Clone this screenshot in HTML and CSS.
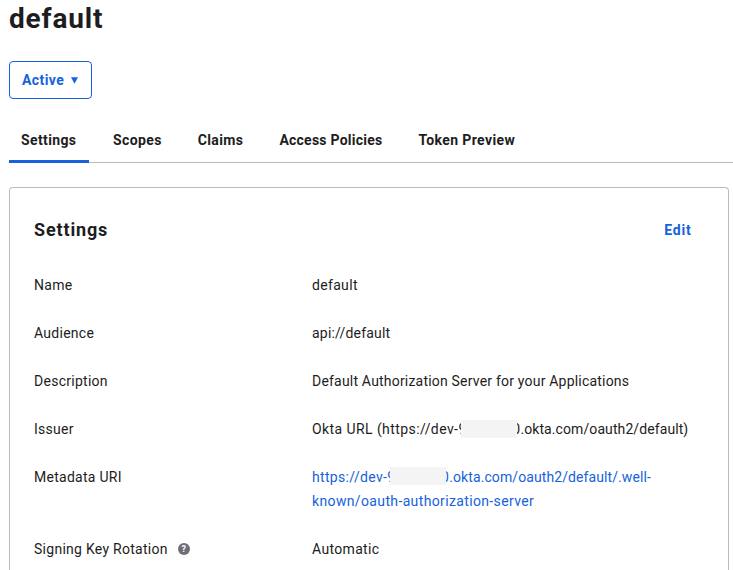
FILE: index.html
```html
<!DOCTYPE html>
<html lang="en">
<head>
<meta charset="utf-8">
<title>default</title>
<link rel="stylesheet" href="styles.css">
</head>
<body>
<h1>default</h1>
<button class="status">Active<svg class="caret" width="7" height="7" viewBox="0 0 7 7"><path d="M0 .3h7L3.5 6.7z" fill="currentColor"/></svg></button>
<nav class="tabs">
<a class="tab active">Settings</a><a class="tab">Scopes</a><a class="tab">Claims</a><a class="tab policies">Access Policies</a><a class="tab">Token Preview</a>
</nav>
<section class="card">
<header><h2>Settings</h2><a class="edit">Edit</a></header>
<dl>
<dt>Name</dt><dd>default</dd>
<dt>Audience</dt><dd class="compact">api://default</dd>
<dt>Description</dt><dd class="compact">Default Authorization Server for your Applications</dd>
<dt>Issuer</dt><dd><span class="prefix">Okta URL (https://dev-</span><span class="mask"><span>9</span><span>0</span></span><span class="domain">.okta.com/oauth2/default)</span></dd>
<dt>Metadata URI</dt><dd class="link">https://dev-<span class="mask high"><span>9</span><span>0</span></span><span class="domain">.okta.com/oauth2/default/.well-</span><br><span class="path">known/oauth-authorization-server</span></dd>
<dt class="rotation">Signing Key Rotation<span class="help">?</span></dt><dd>Automatic</dd>
</dl>
</section>
</body>
</html>
```
FILE: styles.css
```css
html{overflow:hidden}
body{margin:0;height:570px;overflow:hidden;background:#fff;font:400 14px/24px Roboto,sans-serif;letter-spacing:.33px;color:#1d1d21}
h1{margin:0 9px;font-size:28px;line-height:38px;height:36px;font-weight:700;letter-spacing:.85px}
.status{display:flex;align-items:center;box-sizing:border-box;margin:25px 9px 0;padding:0 12px;width:83px;height:38px;border:1px solid #1662dd;border-radius:4px;background:#fff;color:#1662dd;font:700 14px Roboto,sans-serif;letter-spacing:.4px}
.caret{margin-left:7px}
.tabs{display:flex;box-sizing:border-box;margin:20px 0 0 9px;height:44px;border-bottom:1px solid #bbbbc1;gap:12px}
.tab{box-sizing:border-box;height:44px;padding:9px 12px;font-weight:700;letter-spacing:.38px;white-space:nowrap}
.active{width:80px;border-bottom:3px solid #1662dd}
.policies{letter-spacing:.24px}
.card{box-sizing:border-box;margin:24px 4px 0 9px;border:1px solid #bbbbc1;border-bottom:0;border-radius:4px 4px 0 0;padding:30px 24px 0;height:383px;overflow:hidden}
header{display:flex;justify-content:space-between;height:24px}
h2{margin:0;font-size:18px;line-height:24px;font-weight:700;letter-spacing:.85px}
.edit{margin-right:12.5px;color:#1662dd;font-weight:700;letter-spacing:.8px}
dl{margin:31px 0 0;display:grid;grid-template-columns:278px 1fr;row-gap:24px}
dt{display:flex;align-items:center;height:24px;letter-spacing:.27px}
dd{margin:0;white-space:nowrap}
.compact{letter-spacing:.2px}
.prefix{letter-spacing:.42px}
.domain{letter-spacing:.09px}
.path{letter-spacing:.36px}
.link{color:#1662dd}
.mask{position:relative;display:inline-flex;justify-content:space-between;width:62px;height:24px;vertical-align:top}
.mask::after{content:"";position:absolute;left:3px;right:3px;top:3px;height:18px;background:#f4f4f4}
.high::after{top:2px}
.help{display:grid;place-items:center;margin-left:10px;width:12px;height:12px;border-radius:50%;background:#6e6e78;color:#fff;font-size:9px;line-height:12px;font-weight:700;letter-spacing:0}
```
